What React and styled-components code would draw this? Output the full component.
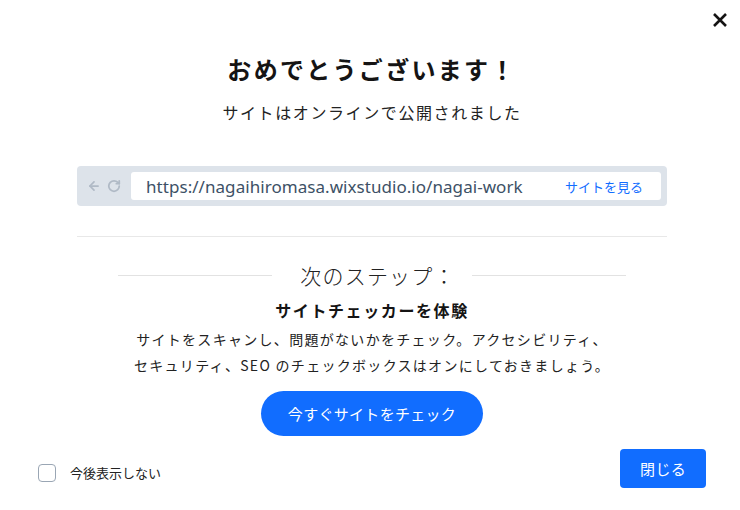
import React from "react";
import styled, { createGlobalStyle } from "styled-components";
import { ArrowLeft, RotateCw } from "lucide-react";

const GlobalStyle = createGlobalStyle`
    html, body {
        margin: 0;
        padding: 0;
        background: #ffffff;
    }
    body {
        font-family: "Noto Sans", "Noto Sans CJK JP", sans-serif;
        color: #151414;
    }
`;

const Dialog = styled.div`
    position: relative;
    width: 740px;
    height: 510px;
    box-sizing: border-box;
    padding: 52px 34px 0 38px;
    display: flex;
    flex-direction: column;
`;

const CloseIcon = styled.button`
    position: absolute;
    top: 10px;
    right: 10px;
    width: 20px;
    height: 20px;
    padding: 0;
    border: none;
    background: none;
    display: flex;
    align-items: center;
    justify-content: center;
    color: #151414;
`;

const Content = styled.div`
    padding: 0 39px;
    display: flex;
    flex-direction: column;
    align-items: center;
`;

const Title = styled.h1`
    margin: 0;
    font-size: 24px;
    line-height: 34px;
    font-weight: 700;
    letter-spacing: 2.3px;
    font-family: "Noto Sans CJK JP", sans-serif;
`;

const Subtitle = styled.p`
    margin: 14px 0 0;
    font-size: 16px;
    line-height: 24px;
    letter-spacing: 1.6px;
    font-family: "Noto Sans CJK JP", sans-serif;
    color: #222;
`;

const BrowserBar = styled.div`
    margin-top: 42px;
    width: 100%;
    height: 40px;
    box-sizing: border-box;
    background: #dde3ea;
    border-radius: 4px;
    padding: 6px 6px 6px 10px;
    display: flex;
    align-items: center;
`;

const NavIcons = styled.div`
    width: 44px;
    display: flex;
    align-items: center;
    gap: 6px;
    color: #b0bac6;
`;

const AddressField = styled.div`
    flex: 1;
    height: 28px;
    background: #ffffff;
    border-radius: 3px;
    padding: 0 18px 0 15px;
    display: flex;
    align-items: center;
    justify-content: space-between;
`;

const Url = styled.span`
    font-size: 17px;
    color: #3d5166;
    letter-spacing: 0.05px;
`;

const ViewLink = styled.a`
    font-size: 13px;
    color: #116dff;
    text-decoration: none;
    font-family: "Noto Sans CJK JP", sans-serif;
`;

const Divider = styled.hr`
    width: 100%;
    margin: 30px 0 0;
    border: none;
    border-top: 1px solid #e8e8e8;
`;

const StepHeading = styled.div`
    margin-top: 23px;
    width: 508px;
    display: flex;
    align-items: center;
    gap: 28px;

    &::before,
    &::after {
        content: "";
        flex: 1;
        border-top: 1px solid #e2e2e2;
    }

    span {
        margin-right: -12px;
        font-size: 21px;
        line-height: 30px;
        font-weight: 300;
        letter-spacing: 1.2px;
        color: #222;
        font-family: "Noto Sans CJK JP", sans-serif;
    }
`;

const StepTitle = styled.h2`
    margin: 8px 0 0;
    font-size: 16px;
    line-height: 24px;
    font-weight: 700;
    letter-spacing: 1.6px;
    font-family: "Noto Sans CJK JP", sans-serif;
`;

const StepText = styled.p`
    margin: 4px 0 0;
    font-size: 14px;
    line-height: 26px;
    letter-spacing: 1.3px;
    text-align: center;
    color: #222;
    font-family: "Noto Sans CJK JP", sans-serif;
`;

const PrimaryButton = styled.button`
    margin-top: 13px;
    height: ${(p) => (p.$pill ? "45px" : "39px")};
    padding: 0 ${(p) => (p.$pill ? "27px" : "20px")};
    border: none;
    border-radius: ${(p) => (p.$pill ? "23px" : "4px")};
    background: #116dff;
    color: #ffffff;
    font-size: 15px;
    letter-spacing: 0.3px;
    font-family: "Noto Sans CJK JP", sans-serif;
    cursor: pointer;
`;

const Footer = styled.div`
    display: flex;
    justify-content: space-between;
    align-items: flex-start;
`;

const CheckRow = styled.label`
    margin-top: 27px;
    display: flex;
    align-items: center;
    gap: 14px;
    font-size: 13px;
    color: #222;
    font-family: "Noto Sans CJK JP", sans-serif;
`;

const Box = styled.span`
    width: 16px;
    height: 16px;
    border: 1px solid #9aa6b4;
    border-radius: 4px;
    background: #fff;
`;

const App = () => {
    return (
        <>
            <GlobalStyle />
            <Dialog>
                <CloseIcon aria-label="close">
                    <svg width="16" height="16" viewBox="0 0 16 16">
                        <path d="M2 2L14 14M14 2L2 14" stroke="currentColor" strokeWidth="2.6" />
                    </svg>
                </CloseIcon>
                <Content>
                    <Title>おめでとうございます！</Title>
                    <Subtitle>サイトはオンラインで公開されました</Subtitle>
                    <BrowserBar>
                        <NavIcons>
                            <ArrowLeft size={14} strokeWidth={3} />
                            <RotateCw size={14} strokeWidth={3} />
                        </NavIcons>
                        <AddressField>
                            <Url>https://nagaihiromasa.wixstudio.io/nagai-work</Url>
                            <ViewLink href="#">サイトを見る</ViewLink>
                        </AddressField>
                    </BrowserBar>
                    <Divider />
                    <StepHeading>
                        <span>次のステップ：</span>
                    </StepHeading>
                    <StepTitle>サイトチェッカーを体験</StepTitle>
                    <StepText>
                        サイトをスキャンし、問題がないかをチェック。アクセシビリティ、
                        <br />
                        セキュリティ、SEO のチェックボックスはオンにしておきましょう。
                    </StepText>
                    <PrimaryButton $pill>今すぐサイトをチェック</PrimaryButton>
                </Content>
                <Footer>
                    <CheckRow>
                        <Box />
                        今後表示しない
                    </CheckRow>
                    <PrimaryButton>閉じる</PrimaryButton>
                </Footer>
            </Dialog>
        </>
    );
};

export default App;
